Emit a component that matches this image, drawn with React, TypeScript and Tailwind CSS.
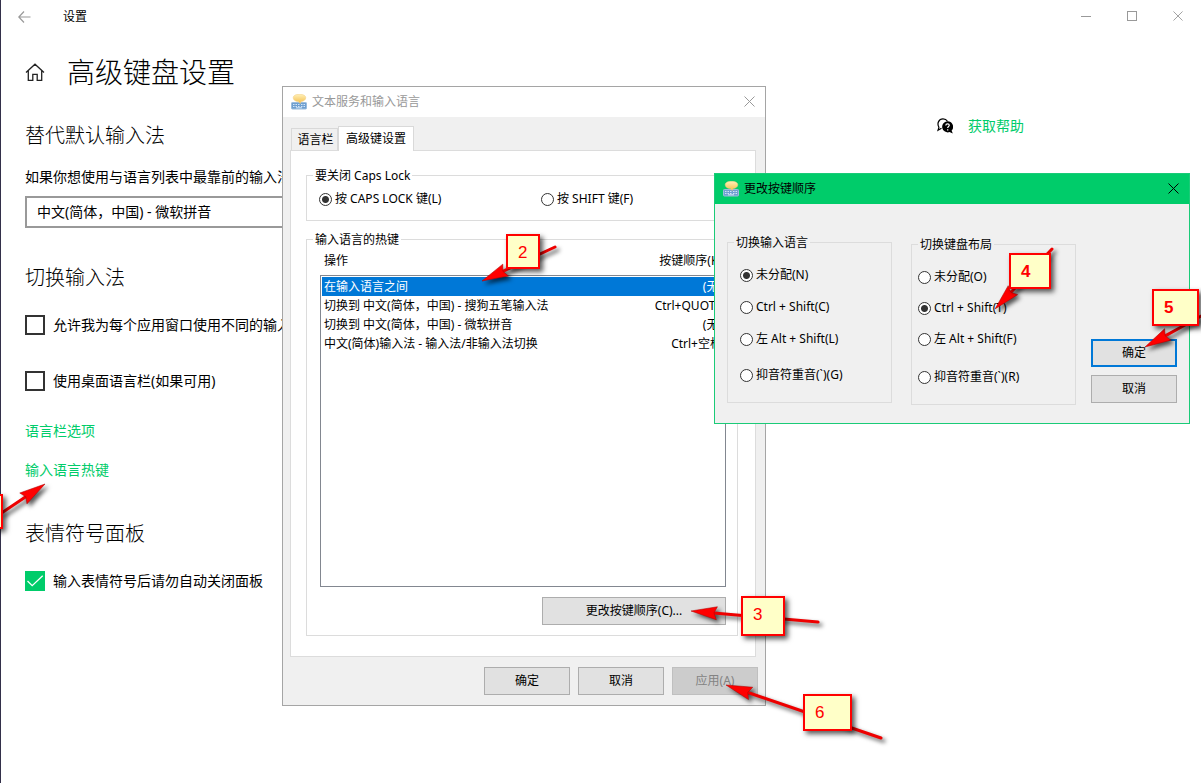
import React from "react";
import type { ReactNode } from "react";

const shortcuts = [
  { action: "在输入语言之间", keys: "(无)", selected: true },
  { action: "切换到 中文(简体，中国) - 搜狗五笔输入法", keys: "Ctrl+QUOTE", selected: false },
  { action: "切换到 中文(简体，中国) - 微软拼音", keys: "(无)", selected: false },
  { action: "中文(简体)输入法 - 输入法/非输入法切换", keys: "Ctrl+空格", selected: false },
];

const arrows = [
  { tip: [45, 484], tail: [0, 514] },
  { tip: [482, 281], tail: [555, 247] },
  { tip: [691, 611], tail: [818, 622] },
  { tip: [995, 309], tail: [1052, 249] },
  { tip: [1145, 347], tail: [1203, 315] },
  { tip: [726, 685], tail: [881, 738] },
];

function KeyboardIcon() {
  return (
    <svg viewBox="0 0 16 16" className="size-4 shrink-0" aria-hidden="true">
      <defs>
        <linearGradient id="bubble" x1="0" y1="0" x2="0" y2="1">
          <stop offset="0" stopColor="#fff0b8" />
          <stop offset="1" stopColor="#f4bd48" />
        </linearGradient>
      </defs>
      <rect x="0.500" y="8.500" width="15" height="6.500" rx="0.800" fill="#6f9fd0" stroke="#9bbcdc" />
      <path
        d="M2 10.500h1.500M4.500 10.500H6M7 10.500h1.500M10 10.500h1.500M12.500 10.500H14M2 12.500h1.500M4.500 12.500H6M7 12.500h1.500M10 12.500h1.500M12.500 12.500H14M5 13.800h6"
        stroke="#dcecfb"
        strokeWidth="0.900"
      />
      <path d="M8.500 0.300c3.900 0 6.300 1.400 6.300 3.500S12.600 7.300 10 7.600L9.200 9.500 7.300 7.600C4.400 7.400 2.200 6 2.200 3.800S4.600.3 8.500.3Z" fill="url(#bubble)" stroke="#f0cd80" strokeWidth="0.500" />
    </svg>
  );
}

function CloseIcon({ className }: { className: string }) {
  return (
    <svg viewBox="0 0 11 11" className={className} fill="none" stroke="currentColor" aria-hidden="true">
      <path d="M0.500 0.500l10 10M10.500 0.500l-10 10" />
    </svg>
  );
}

function Radio({ name, label, checked = false }: { name: string; label: string; checked?: boolean }) {
  return (
    <label className="flex h-5 items-center gap-[3px] whitespace-nowrap">
      <input
        type="radio"
        name={name}
        defaultChecked={checked}
        className="size-[13px] shrink-0 appearance-none rounded-full border border-[#333] bg-white checked:bg-[radial-gradient(circle,#333_0_3px,#fff_4px)]"
      />
      <span className="leading-5">{label}</span>
    </label>
  );
}

function Group({ title, className = "", children }: { title: string; className?: string; children: ReactNode }) {
  return (
    <fieldset className={`min-w-0 border border-[#dcdcdc] ${className}`}>
      <legend className="ml-[6px] h-4 px-[2px] leading-[18px]">{title}</legend>
      {children}
    </fieldset>
  );
}

function Button({ children, className = "border border-[#adadad] bg-[#e1e1e1]", width = "w-[86px]", disabled = false }: { children: ReactNode; className?: string; width?: string; disabled?: boolean }) {
  return (
    <button type="button" disabled={disabled} className={`h-7 shrink-0 ${width} ${className}`}>
      {children}
    </button>
  );
}

function CheckRow({ label, checked = false, className }: { label: string; checked?: boolean; className: string }) {
  return (
    <label className={`flex h-5 items-center gap-2 whitespace-nowrap text-sm ${className}`}>
      <span className="grid size-5 shrink-0 place-items-center">
        <input
          type="checkbox"
          defaultChecked={checked}
          className="peer col-start-1 row-start-1 size-5 appearance-none border-2 border-[#333] checked:border-[#00cc6a] checked:bg-[#00cc6a]"
        />
        <svg viewBox="0 0 20 20" className="pointer-events-none invisible col-start-1 row-start-1 size-5 peer-checked:visible" fill="none" stroke="#fff" strokeWidth="1.300" aria-hidden="true">
          <path d="M2.500 10l4.700 4.700L17.700 4.800" />
        </svg>
      </span>
      {label}
    </label>
  );
}

function SettingsWindow() {
  return (
    <div className="flex min-h-screen flex-col bg-white">
      <header className="flex h-8 items-center justify-between">
        <div className="flex items-center gap-8 pl-[17px] pt-px text-xs">
          <button type="button" aria-label="返回" className="text-[#999]">
            <svg viewBox="0 0 13 12" className="h-3 w-[13px]" fill="none" stroke="currentColor" strokeWidth="1.200" aria-hidden="true">
              <path d="M6 0.500L0.800 6 6 11.500M1 6h11.500" />
            </svg>
          </button>
          <span>设置</span>
        </div>
        <div className="flex text-[#999]">
          <button type="button" aria-label="最小化" className="grid h-8 w-[46px] place-items-center">
            <svg viewBox="0 0 10 10" className="size-[10px]" stroke="currentColor" aria-hidden="true">
              <path d="M0 5.500h10" />
            </svg>
          </button>
          <button type="button" aria-label="最大化" className="grid h-8 w-[46px] place-items-center">
            <svg viewBox="0 0 10 10" className="size-[10px]" fill="none" stroke="currentColor" aria-hidden="true">
              <rect x="0.500" y="0.500" width="9" height="9" />
            </svg>
          </button>
          <button type="button" aria-label="关闭" className="grid h-8 w-[46px] place-items-center">
            <CloseIcon className="size-[10px]" />
          </button>
        </div>
      </header>
      <div className="flex justify-between">
        <main className="w-[460px] px-6 pt-5">
          <div className="flex h-10 items-center gap-[22px]">
            <svg viewBox="0 0 20 18" className="h-[18px] w-5 shrink-0" fill="none" stroke="#222" strokeWidth="1.300" aria-hidden="true">
              <path d="M1 9.500L10 1.200l9 8.300M3.300 7.800v9.500h4.500v-6h4.400v6h4.500V7.800" />
            </svg>
            <h1 className="whitespace-nowrap text-[28px] font-light leading-10">高级键盘设置</h1>
          </div>
          <h2 className="mt-[30px] text-xl font-light leading-7">替代默认输入法</h2>
          <label htmlFor="ime" className="mt-[17px] block whitespace-nowrap text-sm leading-5">
            如果你想使用与语言列表中最靠前的输入法
          </label>
          <select id="ime" className="mt-[9px] block h-8 w-full appearance-none border-2 border-[#999] bg-white px-[10px] text-sm leading-5">
            <option>中文(简体，中国) - 微软拼音</option>
          </select>
          <h2 className="mt-9 text-xl font-light leading-7">切换输入法</h2>
          <CheckRow className="mt-[23px]" label="允许我为每个应用窗口使用不同的输入法" />
          <CheckRow className="mt-9" label="使用桌面语言栏(如果可用)" />
          <a href="#bar" className="mt-[30px] block text-sm leading-5 text-[#00cc6a]">语言栏选项</a>
          <a href="#hotkeys" className="mt-[19px] block text-sm leading-5 text-[#00cc6a]">输入语言热键</a>
          <h2 className="mt-10 text-xl font-light leading-7">表情符号面板</h2>
          <CheckRow className="mt-[23px]" label="输入表情符号后请勿自动关闭面板" checked />
        </main>
        <aside className="w-[264px] pt-[84px]">
          <a href="#help" className="flex items-center gap-[15px] text-sm leading-5 text-[#00cc6a]">
            <svg viewBox="0 0 16 16" className="size-4 shrink-0" aria-hidden="true">
              <path d="M4.500 10.200 1 12.300l.9-3C-.3 5.500 1.800.8 6 .8c2 0 3.600.9 4.500 2.400" fill="none" stroke="#000" strokeWidth="1.200" />
              <path d="M10.300 3.200a5.600 5.600 0 1 0 2.200 10.900l3.300 1.500-1.200-3A5.600 5.600 0 0 0 10.300 3.200Z" fill="#000" />
              <path d="M8.800 7.400c0-2.200 3.500-2.100 3.500-.1 0 1.200-1.600 1.300-1.600 2.700M10.700 11.200v1.200" fill="none" stroke="#fff" strokeWidth="1.200" />
            </svg>
            获取帮助
          </a>
        </aside>
      </div>
    </div>
  );
}

function TextServicesDialog() {
  return (
    <section role="dialog" aria-label="文本服务和输入语言" className="absolute left-[282px] top-[86px] w-[484px] border border-[#a5a5a5] bg-[#f0f0f0] text-xs">
      <header className="flex h-[30px] items-center justify-between bg-white pl-2 pr-[10px] text-[#999]">
        <div className="flex items-center gap-[5px]">
          <KeyboardIcon />
          文本服务和输入语言
        </div>
        <button type="button" aria-label="关闭" className="pb-[2px]">
          <CloseIcon className="size-[11px]" />
        </button>
      </header>
      <div className="pl-[7px] pr-[9px] pt-[9px]">
        <div role="tablist" className="flex h-6 items-end pl-px">
          <button type="button" role="tab" aria-selected="false" className="h-[22px] w-[47px] whitespace-nowrap border border-b-0 border-[#d9d9d9] pl-[2px]">
            语言栏
          </button>
          <button type="button" role="tab" aria-selected="true" className="relative -mb-px h-[25px] w-[76px] whitespace-nowrap border border-b-0 border-[#d9d9d9] bg-white">
            高级键设置
          </button>
        </div>
        <div role="tabpanel" className="border border-[#dcdcdc] bg-white pb-5 pl-[15px] pr-[17px] pt-4">
          <Group title="要关闭 Caps Lock">
            <div className="grid grid-cols-[222px_1fr] pb-[11px] pl-3 pt-[6px]">
              <Radio name="caps" label="按 CAPS LOCK 键(L)" checked />
              <Radio name="caps" label="按 SHIFT 键(F)" />
            </div>
          </Group>
          <Group title="输入语言的热键" className="mt-[10px]">
            <div className="flex flex-col pb-[10px] pl-[13px] pr-[11px] pt-1">
              <div className="flex justify-between px-1 leading-5">
                <span>操作</span>
                <span>按键顺序(K)</span>
              </div>
              <div className="mt-1 h-[312px] border border-[#828790] bg-white p-px">
                <table className="w-full border-collapse">
                  <tbody>
                    {shortcuts.map((row) => (
                      <tr key={row.action} className={row.selected ? "h-[19px] bg-[#0078d7] text-white" : "h-[19px]"}>
                        <td className="whitespace-nowrap px-[2px] leading-[19px]">{row.action}</td>
                        <td className="whitespace-nowrap px-[2px] text-right leading-[19px]">{row.keys}</td>
                      </tr>
                    ))}
                  </tbody>
                </table>
              </div>
              <div className="mt-[10px] flex justify-end">
                <Button width="w-[184px]">更改按键顺序(C)...</Button>
              </div>
            </div>
          </Group>
        </div>
      </div>
      <footer className="flex justify-end gap-2 pb-[10px] pr-[7px] pt-[10px]">
        <Button>确定</Button>
        <Button>取消</Button>
        <Button disabled className="border border-[#bfbfbf] bg-[#ccc] text-[#838383]">应用(A)</Button>
      </footer>
    </section>
  );
}

function KeySequenceDialog() {
  return (
    <section role="dialog" aria-label="更改按键顺序" className="absolute left-[714px] top-[173px] w-[476px] border border-[#1acb78] bg-[#f0f0f0] text-xs">
      <header className="flex h-[30px] items-center justify-between bg-[#00cc6a] pl-2 pr-[10px]">
        <div className="flex items-center gap-[5px]">
          <KeyboardIcon />
          更改按键顺序
        </div>
        <button type="button" aria-label="关闭" className="pb-[2px]">
          <CloseIcon className="size-[11px]" />
        </button>
      </header>
      <div className="flex items-start justify-between pb-[18px] pl-3 pr-3 pt-[30px]">
        <Group title="切换输入语言" className="w-[165px]">
          <div className="flex flex-col gap-3 pb-[17px] pl-3 pt-[15px]">
            <Radio name="language" label="未分配(N)" checked />
            <Radio name="language" label="Ctrl + Shift(C)" />
            <Radio name="language" label="左 Alt + Shift(L)" />
            <div className="pt-1">
              <Radio name="language" label="抑音符重音(`)(G)" />
            </div>
          </div>
        </Group>
        <div className="flex items-end gap-[15px] pt-[2px]">
          <Group title="切换键盘布局" className="w-[165px]">
            <div className="flex flex-col gap-[11px] pb-[17px] pl-[6px] pt-[15px]">
              <Radio name="layout" label="未分配(O)" />
              <Radio name="layout" label="Ctrl + Shift(T)" checked />
              <Radio name="layout" label="左 Alt + Shift(F)" />
              <div className="pt-[7px]">
                <Radio name="layout" label="抑音符重音(`)(R)" />
              </div>
            </div>
          </Group>
          <div className="flex flex-col gap-2 pb-[2px]">
            <Button className="border-2 border-[#0078d7] bg-[#e1e1e1]">确定</Button>
            <Button>取消</Button>
          </div>
        </div>
      </div>
    </section>
  );
}

function Callout({ children, className }: { children?: ReactNode; className: string }) {
  return (
    <div className={`absolute border-2 border-[#f00] bg-[#ffffc8] pl-[10px] font-['Liberation_Sans',sans-serif] text-[17px] leading-[33px] text-[#f00] shadow-[3px_3px_5px_rgba(0,0,0,0.65)] ${className}`}>
      {children}
    </div>
  );
}

function Annotations() {
  return (
    <div className="pointer-events-none absolute inset-0">
      <svg viewBox="0 0 1201 783" className="absolute left-0 top-0 h-[783px] w-[1201px] drop-shadow-[3px_3px_2px_rgba(0,0,0,0.65)]" aria-hidden="true">
        {arrows.map(({ tip, tail }) => {
          const dx = tail[0] - tip[0];
          const dy = tail[1] - tip[1];
          const length = Math.hypot(dx, dy);
          const angle = (Math.atan2(dy, dx) * 180) / Math.PI;
          return (
            <g key={tip[0]} transform={`translate(${tip[0]} ${tip[1]}) rotate(${angle})`}>
              <path d={`M20 0H${length}`} stroke="#ee0000" strokeWidth="3" strokeLinecap="round" />
              <path d="M0 0L26 -6.500L23 0L26 6.500Z" fill="#f00" stroke="#b00000" strokeWidth="0.500" />
            </g>
          );
        })}
      </svg>
      <Callout className="left-[-31px] top-[494px] h-[35px] w-[34px]" />
      <Callout className="left-[506px] top-[234px] h-[35px] w-[34px]">2</Callout>
      <Callout className="left-[741px] top-[596px] h-10 w-11">3</Callout>
      <Callout className="left-[1009px] top-[253px] h-9 w-[42px] font-bold">4</Callout>
      <Callout className="left-[1152px] top-[289px] h-[37px] w-[47px] font-bold">5</Callout>
      <Callout className="left-[803px] top-[694px] h-[37px] w-[49px]">6</Callout>
    </div>
  );
}

export default function App() {
  return (
    <div className="relative min-h-screen overflow-hidden bg-[#33304a] pl-px font-['Noto_Sans','Noto_Sans_CJK_SC',sans-serif] text-black">
      <SettingsWindow />
      <TextServicesDialog />
      <KeySequenceDialog />
      <Annotations />
    </div>
  );
}
